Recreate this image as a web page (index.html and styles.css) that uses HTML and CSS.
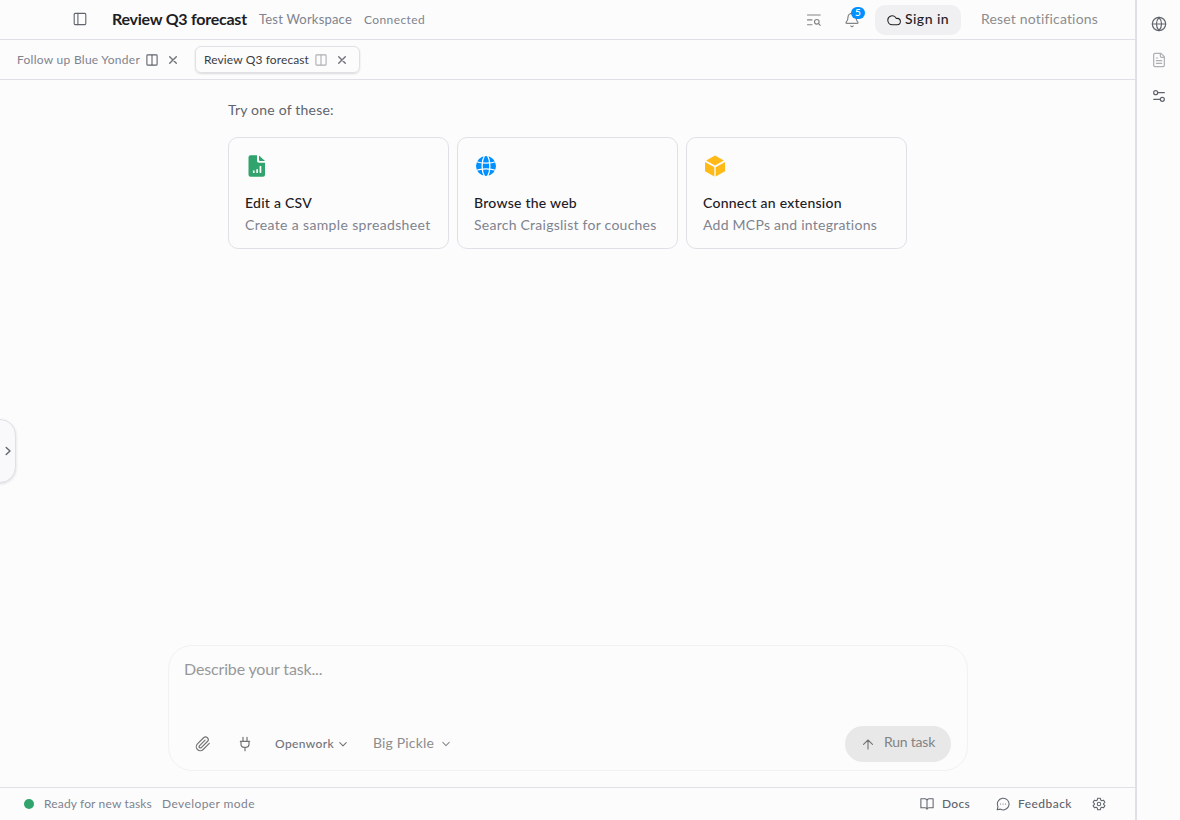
FILE: index.html
```html
<!DOCTYPE html>
<html lang="en">
<head>
<meta charset="utf-8">
<title>Review Q3 forecast</title>
<link rel="stylesheet" href="styles.css">
</head>
<body>
<div class="app">
  <main class="main">
    <header class="topbar">
      <svg class="icon panel-icon" width="14" height="14" viewBox="0 0 14 14"><rect x="1.2" y="1.4" width="11.6" height="11.2" rx="1"/><path d="M4.900 1.400v11.200"/></svg>
      <h1 class="title t">Review Q3 forecast</h1>
      <span class="workspace t">Test Workspace</span>
      <span class="connected t">Connected</span>
      <div class="top-actions">
        <svg class="icon search-icon" width="16" height="16" viewBox="0 0 16 16"><path d="M1.500 3h12.700M1.500 7.900h4.500M1.500 12.800h4.500"/><circle cx="10.800" cy="9.800" r="2.300"/><path d="m12.600 11.500 1.600 1.800"/></svg>
        <div class="bell">
          <svg class="icon" width="16" height="16" viewBox="0 0 24 24"><path d="M10.300 21a2 2 0 0 0 3.400 0M3.300 15.300A1 1 0 0 0 4 17h16a1 1 0 0 0 .7-1.700C19.400 14 18 12.500 18 8A6 6 0 0 0 6 8c0 4.500-1.400 6-2.700 7.300"/></svg>
          <span class="badge">5</span>
        </div>
        <button class="signin"><svg class="icon" width="14" height="14" viewBox="0 0 24 24"><path d="M17.500 20H9A7.500 7.500 0 1 1 15.700 9.200h1.800a5.400 5.400 0 1 1 0 10.800Z"/></svg><span class="signin-label t">Sign in</span></button>
        <span class="reset t">Reset notifications</span>
      </div>
    </header>
    <nav class="tabs">
      <div class="tab">
        <span class="tab-one t">Follow up Blue Yonder</span>
        <svg class="icon split" width="12" height="12" viewBox="0 0 12 12"><rect x=".9" y=".9" width="10.200" height="10.200" rx=".8"/><path d="M6 1v10"/></svg>
        <svg class="icon close" width="10" height="10" viewBox="0 0 10 10"><path d="m1.700 1.700 6.600 6.600m0-6.600-6.600 6.600"/></svg>
      </div>
      <div class="tab active">
        <span class="tab-two t">Review Q3 forecast</span>
        <svg class="icon split" width="12" height="12" viewBox="0 0 12 12"><rect x=".9" y=".9" width="10.200" height="10.200" rx=".8"/><path d="M6 1v10"/></svg>
        <svg class="icon close" width="10" height="10" viewBox="0 0 10 10"><path d="m1.700 1.700 6.600 6.600m0-6.600-6.600 6.600"/></svg>
      </div>
    </nav>
    <section class="content">
      <p class="try t">Try one of these:</p>
      <div class="cards">
        <article class="card">
          <svg class="card-icon" width="24" height="24" viewBox="0 0 24 24"><path fill="#30a46c" fill-rule="evenodd" d="M5.500 1.200H12v5.600c0 1.100.9 2 2 2h6v12a2 2 0 0 1-2 2H5.500a2 2 0 0 1-2-2V3.200a2 2 0 0 1 2-2ZM7.900 16.600v2.400h1.700v-2.400Zm3.400-1.400v3.800H13v-3.800Zm3.300-3.200v7h1.700v-7Z"/><path fill="#30a46c" d="M14 1.600V6c0 .5.400.9.900.9H20Z"/></svg>
          <h2 class="edit t">Edit a CSV</h2>
          <p class="edit-sub t">Create a sample spreadsheet</p>
        </article>
        <article class="card">
          <svg class="card-icon" width="24" height="24" viewBox="0 0 24 24"><circle cx="12" cy="12" r="10" fill="#0090ff"/><g fill="none" stroke="#fdfdfd" stroke-width="1.300"><path d="M1.500 7.500Q6 9.200 12 9.200t10.500-1.700M1.500 16.500Q6 14.800 12 14.800t10.500 1.700"/><path d="M10.500 1.500C7.300 7 7.300 17 10.500 22.500M13.500 1.500c3.200 5.500 3.200 15.500 0 21"/></g></svg>
          <h2 class="browse t">Browse the web</h2>
          <p class="browse-sub t">Search Craigslist for couches</p>
        </article>
        <article class="card">
          <svg class="card-icon" width="24" height="24" viewBox="0 0 24 24"><g fill="#ffba18"><path d="m12 1.600 8.900 4.900L12 11.600 3.100 6.500Z"/><path d="m2 8 9.300 5.200v9.400L2 17.200Z"/><path d="m22 8-9.300 5.200v9.400l9.300-5.400Z"/></g></svg>
          <h2 class="connect t">Connect an extension</h2>
          <p class="connect-sub t">Add MCPs and integrations</p>
        </article>
      </div>
      <button class="drawer"><svg class="icon" width="8" height="12" viewBox="0 0 8 12"><path d="m2.200 2.500 3.800 3.500-3.800 3.500"/></svg></button>
    </section>
    <section class="composer">
      <p class="placeholder t">Describe your task...</p>
      <div class="tools">
        <svg class="icon clip" width="16" height="16" viewBox="0 0 24 24"><path d="m21.400 11.100-9.200 9.200a6 6 0 0 1-8.500-8.500l9.200-9.200a4 4 0 0 1 5.700 5.700l-9.200 9.200a2 2 0 0 1-2.800-2.800l8.500-8.500"/></svg>
        <svg class="icon plug" width="16" height="16" viewBox="0 0 24 24"><path d="M12 22v-5M9 8V2M15 8V2M5 8h14M18 8v4.500a4.500 4.500 0 0 1-4.500 4.500h-3A4.500 4.500 0 0 1 6 12.500V8"/></svg>
        <span class="openwork t">Openwork</span>
        <svg class="icon chev" width="8" height="6" viewBox="0 0 8 6"><path d="M.8 1.700 4 4.900l3.200-3.200"/></svg>
        <span class="pickle t">Big Pickle</span>
        <svg class="icon chev light" width="8" height="6" viewBox="0 0 8 6"><path d="M.8 1.400 4 4.600l3.200-3.200"/></svg>
        <button class="run"><svg class="icon" width="12" height="12" viewBox="0 0 12 12"><path d="M6 11V2M1.500 6.300 6 2l4.500 4.300"/></svg><span class="run-label t">Run task</span></button>
      </div>
    </section>
    <footer class="status">
      <i class="dot"></i>
      <span class="ready t">Ready for new tasks</span>
      <span class="dev t">Developer mode</span>
      <div class="links">
        <svg class="icon book" width="14" height="14" viewBox="0 0 24 24"><path d="M12 6.500V21M12 6.500A3.500 3.500 0 0 0 8.500 3H1.500v15.500h7c2 0 3.500 1 3.500 2.500 0-1.500 1.500-2.500 3.500-2.500h7V3h-7A3.500 3.500 0 0 0 12 6.500"/></svg>
        <span class="docs t">Docs</span>
        <svg class="icon bubble" width="14" height="14" viewBox="0 0 24 24"><path d="M3.400 16.500A10 10 0 1 1 7.500 20.800L2 22ZM7.500 12h.1M12 12h.1M16.400 12h.1"/></svg>
        <span class="feedback t">Feedback</span>
        <svg class="icon gear" width="14" height="14" viewBox="0 0 24 24"><path d="m9.800 2-.7 3.100-2 1.200-3-.9L1.900 9.200l2.300 2.200v1.200l-2.300 2.200 2.200 3.800 3-.9 2 1.200.7 3.100h4.400l.7-3.100 2-1.200 3 .9 2.200-3.800-2.300-2.200v-1.200l2.300-2.200-2.200-3.800-3 .9-2-1.200-.7-3.100Z"/><circle cx="12" cy="12" r="3"/></svg>
      </div>
    </footer>
  </main>
  <aside class="rail">
    <svg class="icon" width="16" height="16" viewBox="0 0 24 24"><circle cx="12" cy="12" r="10"/><path d="M2 12h20M12 2a15 15 0 0 0 0 20 15 15 0 0 0 0-20"/></svg>
    <svg class="icon faded" width="16" height="16" viewBox="0 0 24 24"><path d="M15 2H6a2 2 0 0 0-2 2v16a2 2 0 0 0 2 2h12a2 2 0 0 0 2-2V7ZM14 2v4a2 2 0 0 0 2 2h4M10 9H8M16 13H8M16 17H8"/></svg>
    <svg class="icon" width="16" height="16" viewBox="0 0 24 24"><circle cx="7" cy="7" r="3"/><path d="M10 7h10M4 17h10"/><circle cx="17" cy="17" r="3"/></svg>
  </aside>
</div>
</body>
</html>
```
FILE: styles.css
```css
* { box-sizing: border-box; }
body { margin: 0; background: #fcfcfd; color: #1c2024; font-family: Lato, "Open Sans", sans-serif; }
h1, h2, p { margin: 0; font-weight: 500; }
p { font-weight: 400; }
button { border: 0; padding: 0; font: inherit; color: inherit; }
.t { display: block; flex: none; padding-bottom: 2px; white-space: nowrap; }
.icon { display: block; flex: none; fill: none; stroke: #60646c; stroke-width: 1.1; stroke-linecap: round; stroke-linejoin: round; }
.icon[viewBox="0 0 24 24"] { stroke-width: 1.8; }
.app { display: flex; height: 820px; overflow: hidden; }
.main { display: flex; flex-direction: column; width: 1135px; }
.topbar { display: flex; align-items: center; height: 40px; padding: 0 37px 0 73px; border-bottom: 1px solid #e0e1e6; }
.panel-icon { margin-bottom: 1px; }
.title { width: 135px; margin-left: 25px; font-size: 16px; font-weight: 700; letter-spacing: -0.25px; }
.workspace { width: 93px; margin-left: 12px; font-size: 13px; letter-spacing: 0.2px; color: #80838d; }
.connected { width: 61px; margin-left: 12px; padding-bottom: 0; font-size: 12px; letter-spacing: 0.4px; color: #80838d; }
.top-actions { display: flex; align-items: center; margin-left: auto; }
.search-icon, .bell .icon { stroke: #838383; }
.bell { position: relative; margin-left: 22px; }
.badge { position: absolute; left: 7px; top: -5px; width: 14px; height: 12px; border-radius: 6px; background: #0090ff; color: #fff; font-size: 10px; font-weight: 600; line-height: 11px; text-align: center; }
.signin { display: flex; align-items: center; width: 86px; height: 30px; margin-left: 15px; padding-left: 12px; border-radius: 10px; background: #f0f0f3; }
.signin .icon { stroke: #202020; }
.signin-label { width: 44px; margin-left: 4px; font-size: 14px; font-weight: 500; letter-spacing: 0.45px; }
.reset { width: 117px; margin-left: 20px; font-size: 14px; letter-spacing: 0.17px; color: #8d8d8d; }
.tabs { display: flex; align-items: center; gap: 6px; height: 40px; padding-left: 8px; border-bottom: 1px solid #e0e1e6; }
.tab { display: flex; align-items: center; height: 27px; padding: 0 10px 0 9px; font-size: 12px; color: #80838d; }
.tab .t { padding-bottom: 1px; }
.active { width: 165px; padding-left: 8px; border: 1px solid #e0e1e6; border-radius: 6px; color: #3a3c42; box-shadow: 0 1px 2px #0002; }
.split { margin-left: 6px; }
.active .split { opacity: .5; }
.close { margin-left: 10px; stroke-width: 1.4; stroke: #70737a; }
.tab-one { width: 123px; letter-spacing: 0.27px; }
.tab-two { width: 105px; letter-spacing: 0.11px; }
.tab:first-child { margin-right: 1px; }
.content { position: relative; flex: 1; padding: 21px 0 0 228px; }
.try { width: 106px; height: 18px; font-size: 14px; line-height: 18px; letter-spacing: 0.21px; color: #60646c; }
.cards { display: flex; gap: 8px; margin-top: 18px; }
.card { width: 221px; height: 112px; padding: 16px; border: 1px solid #e0e1e6; border-radius: 10px; }
.card-icon { display: block; margin-bottom: 14px; }
.card .t { padding: 0; font-size: 14px; line-height: 22px; letter-spacing: 0.25px; }
.card p { color: #80838d; }
.edit { width: 67px; }
.card .edit-sub { width: 186px; letter-spacing: 0.35px; }
.browse { width: 103px; }
.browse-sub { width: 183px; }
.connect { width: 139px; }
.connect-sub { width: 175px; }
.drawer { position: absolute; left: -1px; top: 339px; display: flex; align-items: center; justify-content: flex-end; width: 17px; height: 64px; padding-right: 3px; border: 1px solid #e0e1e6; border-radius: 0 16px 16px 0; background: #f9f9fb; box-shadow: 0 1px 3px #0002; }
.drawer .icon { stroke-width: 1.4; }
.composer { width: 800px; height: 126px; margin: 0 0 16px 168px; padding: 14px 16px 0 15px; border: 1px solid #f2f2f4; border-radius: 24px; }
.placeholder { width: 139px; height: 18px; font-size: 16px; line-height: 18px; letter-spacing: -0.15px; color: #989898; }
.tools { display: flex; align-items: center; height: 36px; margin-top: 48px; padding-left: 11px; }
.tools .icon { stroke: #747474; }
.plug { margin-left: 26px; }
.openwork { width: 59px; margin-left: 22px; font-size: 12px; letter-spacing: 0.36px; color: #70737a; font-weight: 500; }
.chev { margin-left: 5px; }
.pickle { width: 61px; margin-left: 26px; padding-bottom: 3px; font-size: 14px; letter-spacing: 0.17px; color: #8d8d8d; }
.tools .light { margin-left: 8px; stroke: #8d8d8d; }
.run { display: flex; align-items: center; width: 106px; height: 36px; margin-left: auto; padding-left: 17px; border-radius: 18px; background: #e8e8e8; color: #838383; }
.run-label { width: 51px; margin-left: 10px; padding-bottom: 5px; font-size: 14px; letter-spacing: -0.22px; }
.status { display: flex; align-items: center; height: 33px; padding: 0 29px 0 24px; border-top: 1px solid #e0e1e6; font-size: 12px; color: #80838d; }
.dot { width: 10px; height: 10px; border-radius: 50%; background: #30a46c; }
.ready { width: 108px; margin-left: 10px; letter-spacing: 0.15px; }
.dev { width: 93px; margin-left: 10px; letter-spacing: 0.41px; }
.links { display: flex; align-items: center; margin-left: auto; color: #60646c; font-weight: 500; }
.docs { width: 28px; margin-left: 8px; letter-spacing: 0.3px; }
.bubble { margin-left: 26px; }
.feedback { width: 54px; margin-left: 8px; letter-spacing: 0.45px; }
.gear { margin-left: 20px; }
.rail { display: flex; flex: 1; flex-direction: column; align-items: center; gap: 20px; padding-top: 16px; border-left: 2px solid #e0e1e6; }
.faded { opacity: .5; }
```
